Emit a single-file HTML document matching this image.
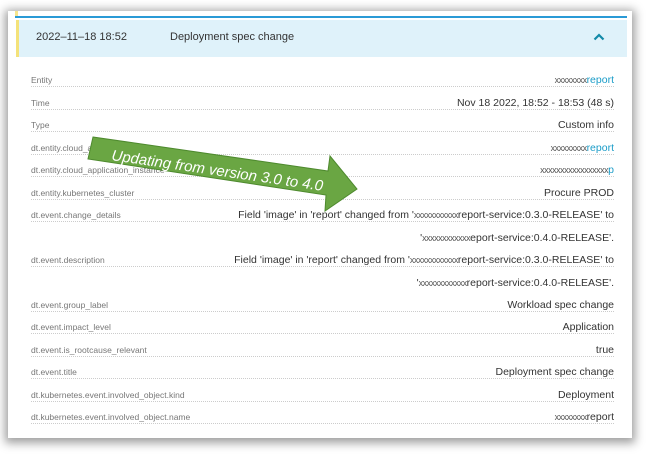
<!DOCTYPE html>
<html><head><meta charset="utf-8"><style>
body{margin:0;width:649px;height:454px;background:#fff;font-family:"Liberation Sans",sans-serif;overflow:hidden;position:relative}
.card{position:absolute;left:8px;top:11px;width:624px;height:427px;background:#fff;box-shadow:0 2px 9px 3px rgba(0,0,0,.38)}
.topline{position:absolute;left:15px;top:16px;width:612px;height:2px;background:#2a9ad6}
.ystub{position:absolute;left:15px;top:11px;width:3px;height:5px;background:#f6e58d}
.hdr{position:absolute;left:16px;top:20px;width:611px;height:37px;background:#dff2fa;border-left:3px solid #f4e27a;box-sizing:border-box}
.hdr span{position:absolute;top:11px;font-size:11px;color:#333}
.chev{position:absolute;left:593px;top:33px}
.row{position:absolute;left:31px;width:583px;height:14px;border-bottom:1px dotted #ccc}
.row .l{position:absolute;left:0;bottom:1px;font-size:8.5px;color:#777;background:#fff;padding-right:2px}
.row .v{position:absolute;right:0;bottom:0;font-size:10.5px;color:#333;background:#fff;padding-left:2px;white-space:nowrap}
.b{color:#1a9cc8}.x{letter-spacing:-0.5px;color:#555;font-size:9px}
.cont{position:absolute;right:35px;font-size:10.5px;color:#333;white-space:nowrap}
</style></head><body>
<div class="card"></div>
<div class="ystub"></div>
<div class="topline"></div>
<div class="hdr"><span style="left:17px">2022–11–18 18:52</span><span style="left:151px">Deployment spec change</span></div>
<svg class="chev" width="12" height="8" viewBox="0 0 12 8"><path d="M1.5 6.5 L6 2 L10.5 6.5" fill="none" stroke="#138aa8" stroke-width="2.2"/></svg>

<div class="row" style="top:72px"><span class="l">Entity</span><span class="v"><span class="x">xxxxxxxx</span><span class="b">report</span></span></div>
<div class="row" style="top:95px"><span class="l">Time</span><span class="v">Nov 18 2022, 18:52 - 18:53 (48 s)</span></div>
<div class="row" style="top:117px"><span class="l">Type</span><span class="v">Custom info</span></div>
<div class="row" style="top:140px"><span class="l">dt.entity.cloud_application</span><span class="v"><span class="x">xxxxxxxxx</span><span class="b">report</span></span></div>
<div class="row" style="top:162px"><span class="l">dt.entity.cloud_application_instance</span><span class="v"><span class="x">xxxxxxxxxxxxxxxxx</span><span class="b">p</span></span></div>
<div class="row" style="top:185px"><span class="l">dt.entity.kubernetes_cluster</span><span class="v">Procure PROD</span></div>
<div class="row" style="top:207px"><span class="l">dt.event.change_details</span><span class="v">Field 'image' in 'report' changed from '<span class="x">xxxxxxxxxxx</span>report-service:0.3.0-RELEASE' to</span></div>
<div class="cont" style="top:232px">'<span class="x">xxxxxxxxxxxx</span>eport-service:0.4.0-RELEASE'.</div>
<div class="row" style="top:252px"><span class="l">dt.event.description</span><span class="v">Field 'image' in 'report' changed from '<span class="x">xxxxxxxxxxxx</span>report-service:0.3.0-RELEASE' to</span></div>
<div class="cont" style="top:277px">'<span class="x">xxxxxxxxxxxx</span>report-service:0.4.0-RELEASE'.</div>
<div class="row" style="top:297px"><span class="l">dt.event.group_label</span><span class="v">Workload spec change</span></div>
<div class="row" style="top:319px"><span class="l">dt.event.impact_level</span><span class="v">Application</span></div>
<div class="row" style="top:342px"><span class="l">dt.event.is_rootcause_relevant</span><span class="v">true</span></div>
<div class="row" style="top:364px"><span class="l">dt.event.title</span><span class="v">Deployment spec change</span></div>
<div class="row" style="top:387px"><span class="l">dt.kubernetes.event.involved_object.kind</span><span class="v">Deployment</span></div>
<div class="row" style="top:409px"><span class="l">dt.kubernetes.event.involved_object.name</span><span class="v"><span class="x">xxxxxxxx</span>report</span></div>

<svg style="position:absolute;left:0;top:0" width="649" height="454">
<polygon points="93,137 328,171 330,156 357,189 325,211 326,195 88,159" fill="#6aa643" stroke="#4e8a2e" stroke-width="1"/>
<text x="0" y="0" transform="translate(111,160) rotate(8.3)" font-family="Liberation Sans, sans-serif" font-style="italic" font-size="15" fill="#fff">Updating from version 3.0 to 4.0</text>
</svg>
</body></html>
